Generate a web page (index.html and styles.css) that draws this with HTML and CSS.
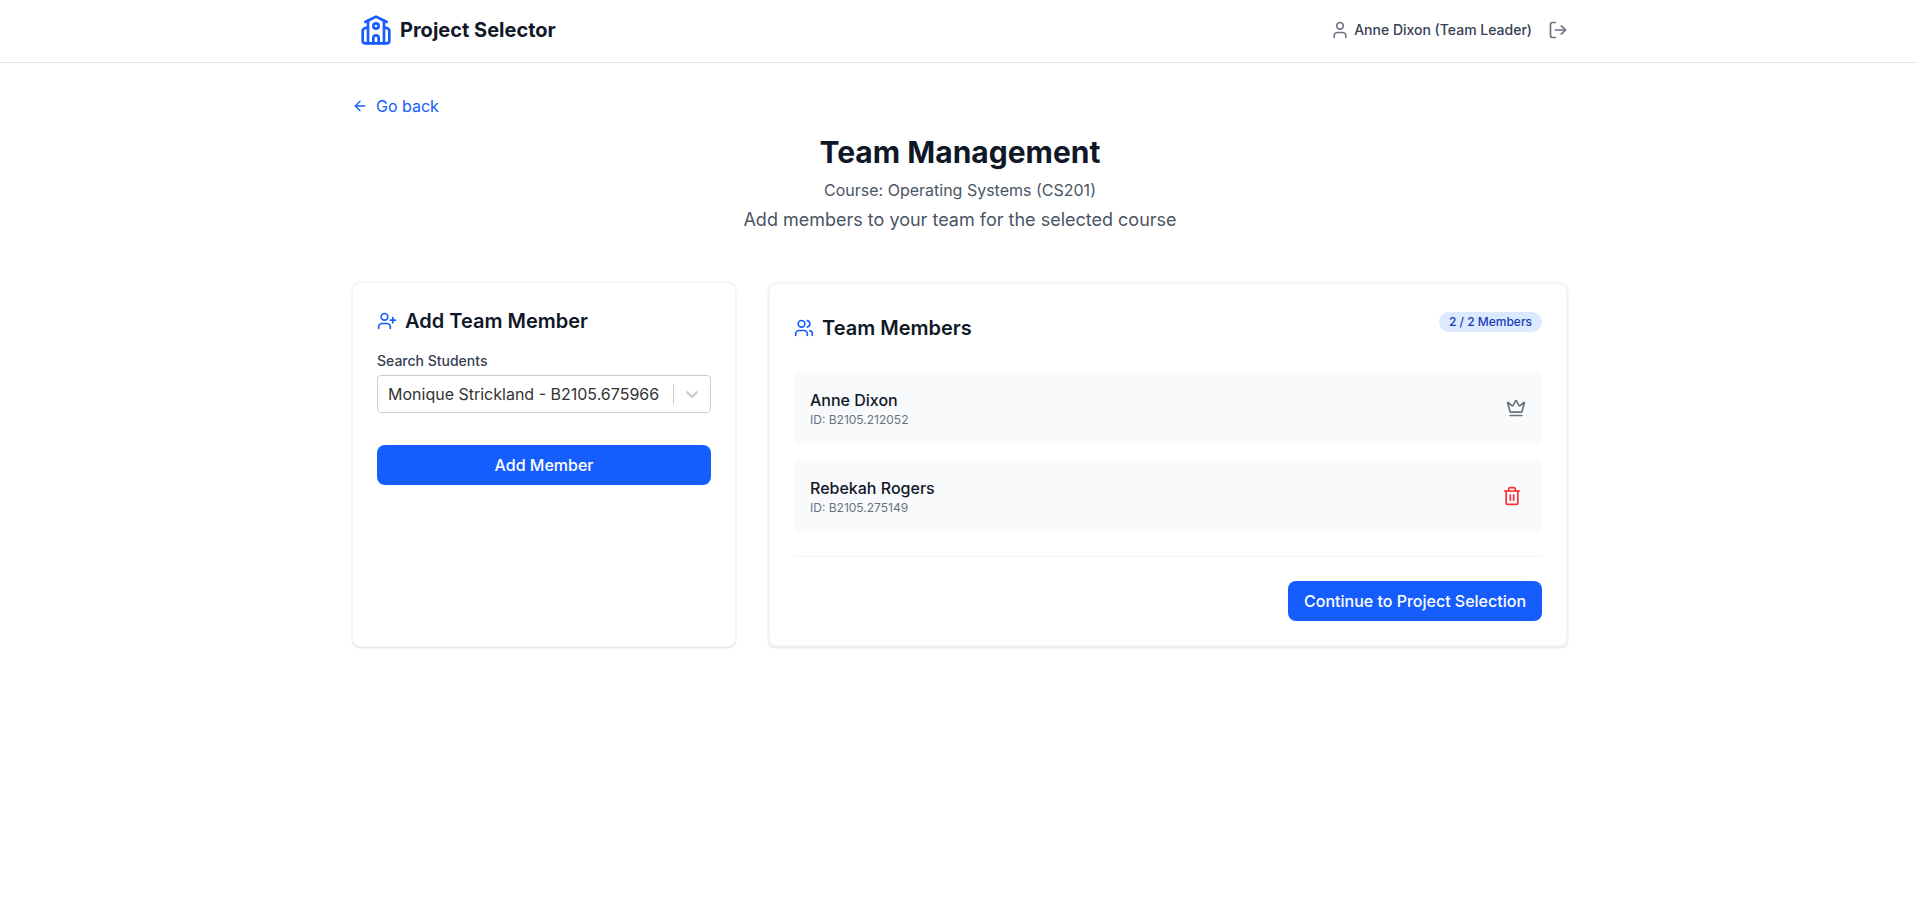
FILE: index.html
```html
<!DOCTYPE html>
<html lang="en">
<head>
  <meta charset="UTF-8">
  <title>Project Selector</title>
  <link rel="stylesheet" href="styles.css">
</head>
<body>
  <header class="navbar">
    <div class="navbar-inner">
      <div class="brand">
        <svg class="icon brand-icon" viewBox="0 0 24 24">
          <path d="M14 22v-4a2 2 0 1 0-4 0v4"/>
          <path d="m18 10 2.9.9a2 2 0 0 1 1.100 1.800V20a2 2 0 0 1-2 2H4a2 2 0 0 1-2-2v-7.300a2 2 0 0 1 1.100-1.800L6 10"/>
          <path d="M18 5v17"/>
          <path d="m4 6 8-4 8 4"/>
          <path d="M6 5v17"/>
          <circle cx="12" cy="9" r="2"/>
        </svg>
        <span class="brand-name">Project Selector</span>
      </div>
      <div class="user-menu">
        <div class="user">
          <svg class="icon" viewBox="0 0 24 24">
            <path d="M19 21v-2a4 4 0 0 0-4-4H9a4 4 0 0 0-4 4v2"/>
            <circle cx="12" cy="7" r="4"/>
          </svg>
          <span class="user-name">Anne Dixon (Team Leader)</span>
        </div>
        <button type="button" class="icon-button" aria-label="Log out">
          <svg class="icon" viewBox="0 0 24 24">
            <path d="M9 21H5a2 2 0 0 1-2-2V5a2 2 0 0 1 2-2h4"/>
            <path d="m16 17 5-5-5-5"/>
            <path d="M21 12H9"/>
          </svg>
        </button>
      </div>
    </div>
  </header>

  <main class="container">
    <a class="go-back" href="#">
      <svg class="icon icon-small" viewBox="0 0 24 24">
        <path d="m12 19-7-7 7-7"/>
        <path d="M19 12H5"/>
      </svg>
      Go back
    </a>

    <div class="page-heading">
      <h1>Team Management</h1>
      <p class="course">Course: Operating Systems (CS201)</p>
      <p class="subtitle">Add members to your team for the selected course</p>
    </div>

    <div class="columns">
      <section class="card add-card">
        <h2 class="card-title">
          <svg class="icon" viewBox="0 0 24 24">
            <path d="M16 21v-2a4 4 0 0 0-4-4H6a4 4 0 0 0-4 4v2"/>
            <circle cx="9" cy="7" r="4"/>
            <path d="M19 8v6"/>
            <path d="M22 11h-6"/>
          </svg>
          Add Team Member
        </h2>
        <div class="field-label">Search Students</div>
        <div class="select">
          <div class="select-value">Monique Strickland - B2105.675966</div>
          <span class="select-separator"></span>
          <div class="select-indicator">
            <svg viewBox="0 0 20 20">
              <path d="M4.516 7.548c0.436-0.446 1.043-0.481 1.576 0l3.908 3.747 3.908-3.747c0.533-0.481 1.141-0.446 1.574 0 0.436 0.445 0.408 1.197 0 1.615-0.406 0.418-4.695 4.502-4.695 4.502-0.217 0.223-0.502 0.335-0.787 0.335s-0.570-0.112-0.789-0.335c0 0-4.287-4.084-4.695-4.502s-0.436-1.170 0-1.615z"/>
            </svg>
          </div>
        </div>
        <button type="button" class="btn-primary btn-block">Add Member</button>
      </section>

      <div class="card">
        <section class="card card-inner">
          <div class="members-header">
            <h2 class="card-title">
              <svg class="icon" viewBox="0 0 24 24">
                <path d="M16 21v-2a4 4 0 0 0-4-4H6a4 4 0 0 0-4 4v2"/>
                <circle cx="9" cy="7" r="4"/>
                <path d="M22 21v-2a4 4 0 0 0-3-3.870"/>
                <path d="M16 3.130a4 4 0 0 1 0 7.750"/>
              </svg>
              Team Members
            </h2>
            <span class="badge">2 / 2 Members</span>
          </div>

          <div class="members">
            <div class="member">
              <div>
                <p class="member-name">Anne Dixon</p>
                <p class="member-id">ID: B2105.212052</p>
              </div>
              <svg class="icon leader-icon" viewBox="0 0 24 24">
                <path d="M11.562 3.266a.5.5 0 0 1 .876 0L15.390 8.870a1 1 0 0 0 1.516.294L21.183 5.500a.5.5 0 0 1 .798.519l-2.834 10.246a1 1 0 0 1-.956.734H5.810a1 1 0 0 1-.957-.734L2.020 6.020a.5.5 0 0 1 .798-.519l4.276 3.664a1 1 0 0 0 1.516-.294z"/>
                <path d="M5 21h14"/>
              </svg>
            </div>
            <div class="member">
              <div>
                <p class="member-name">Rebekah Rogers</p>
                <p class="member-id">ID: B2105.275149</p>
              </div>
              <button type="button" class="icon-button delete-button" aria-label="Remove member">
                <svg class="icon" viewBox="0 0 24 24">
                  <path d="M3 6h18"/>
                  <path d="M19 6v14c0 1-1 2-2 2H7c-1 0-2-1-2-2V6"/>
                  <path d="M8 6V4c0-1 1-2 2-2h4c1 0 2 1 2 2v2"/>
                  <path d="M10 11v6"/>
                  <path d="M14 11v6"/>
                </svg>
              </button>
            </div>
          </div>

          <div class="card-footer">
            <button type="button" class="btn-primary">Continue to Project Selection</button>
          </div>
        </section>
      </div>
    </div>
  </main>
</body>
</html>
```
FILE: styles.css
```css
* {
  box-sizing: border-box;
}

html {
  overflow-x: hidden;
}

body {
  font-family: Inter, sans-serif;
  font-size: 16px;
  line-height: 24px;
  margin: 0;
  width: 1920px;
  min-height: 100vh;
  background-color: #fff;
  color: #101828;
}

h1,
h2,
p {
  margin: 0;
}

.icon {
  display: block;
  flex-shrink: 0;
  width: 20px;
  height: 20px;
  fill: none;
  stroke: currentColor;
  stroke-width: 2;
  stroke-linecap: round;
  stroke-linejoin: round;
}

.icon-small {
  width: 16px;
  height: 16px;
}

/* Navbar */
.navbar {
  background-color: #fff;
  border-bottom: 1px solid #e5e7eb;
}

.navbar-inner {
  display: flex;
  justify-content: space-between;
  align-items: center;
  width: 1216px;
  height: 62px;
  margin: 0 auto;
  padding: 0 0 2px 8px;
}

.brand,
.user-menu,
.user {
  display: flex;
  align-items: center;
}

.brand {
  gap: 8px;
}

.brand-icon {
  width: 32px;
  height: 32px;
  color: #155dfc;
}

.brand-name {
  font-size: 20px;
  line-height: 28px;
  font-weight: 700;
}

.user-menu {
  gap: 16px;
  color: #6a7282;
}

.user {
  gap: 4px;
}

.user-name {
  font-size: 14px;
  line-height: 20px;
  font-weight: 500;
  color: #364153;
}

.icon-button {
  padding: 0;
  border: none;
  background: none;
  color: inherit;
  cursor: pointer;
}

/* Page heading */
.container {
  width: 1216px;
  margin: 0 auto;
  padding: 31px 0 32px;
}

.go-back {
  display: flex;
  align-items: center;
  gap: 8px;
  width: fit-content;
  margin-bottom: 16px;
  color: #155dfc;
  text-decoration: none;
}

.page-heading {
  margin-bottom: 48px;
  text-align: center;
  color: #4a5565;
}

.page-heading h1 {
  margin-bottom: 8px;
  font-size: 30px;
  line-height: 36px;
  font-weight: 700;
  color: #101828;
}

.subtitle {
  margin-top: 4px;
  font-size: 18px;
  line-height: 28px;
}

/* Cards */
.columns {
  display: grid;
  grid-template-columns: 384px 800px;
  gap: 32px;
}

.card {
  background-color: #fff;
  border: 1px solid #f3f4f6;
  border-radius: 8px;
  box-shadow: 0 1px 3px rgba(0, 0, 0, 0.1), 0 1px 2px -1px rgba(0, 0, 0, 0.1);
}

.add-card,
.card-inner {
  padding: 24px;
}

.card-inner {
  box-shadow: none;
}

.card-title {
  display: flex;
  align-items: center;
  gap: 8px;
  font-size: 20px;
  line-height: 28px;
  font-weight: 600;
}

.card-title .icon {
  color: #155dfc;
}

.add-card .card-title {
  margin-bottom: 16px;
}

.field-label {
  margin-bottom: 4px;
  font-size: 14px;
  line-height: 20px;
  font-weight: 500;
  color: #364153;
}

.select {
  display: flex;
  height: 38px;
  margin-bottom: 32px;
  border: 1px solid #ccc;
  border-radius: 4px;
  background-color: #fff;
}

.select-value {
  flex: 1;
  padding: 6px 10px;
  white-space: nowrap;
  color: #333;
}

.select-separator {
  width: 1px;
  margin: 8px 0;
  background-color: #ccc;
}

.select-indicator {
  padding: 8px;
  fill: #ccc;
}

.select-indicator svg {
  display: block;
  width: 20px;
  height: 20px;
}

.btn-primary {
  height: 40px;
  padding: 8px 16px;
  border: none;
  border-radius: 8px;
  background-color: #155dfc;
  color: #fff;
  font: 500 16px/24px Inter, sans-serif;
  cursor: pointer;
}

.btn-block {
  display: block;
  width: 100%;
}

/* Member list */
.members-header {
  display: flex;
  justify-content: space-between;
  align-items: flex-start;
  height: 40px;
  margin-bottom: 24px;
}

.members-header .card-title {
  height: 40px;
}

.badge {
  margin-top: 4px;
  padding: 2px 10px;
  border-radius: 10px;
  background-color: #dbeafe;
  color: #193cb8;
  font-size: 12px;
  line-height: 16px;
  font-weight: 500;
}

.members {
  display: flex;
  flex-direction: column;
  gap: 16px;
  margin-bottom: 24px;
}

.member {
  display: flex;
  justify-content: space-between;
  align-items: center;
  padding: 16px;
  border-radius: 8px;
  background-color: #f9fafb;
}

.member-name {
  font-weight: 500;
}

.member-id {
  font-size: 12px;
  line-height: 16px;
  color: #6a7282;
}

.leader-icon {
  color: #6a7282;
}

.delete-button {
  padding: 4px;
  color: #fb2c36;
}

.card-footer {
  display: flex;
  justify-content: flex-end;
  padding-top: 24px;
  border-top: 1px solid #f3f4f6;
}
```
